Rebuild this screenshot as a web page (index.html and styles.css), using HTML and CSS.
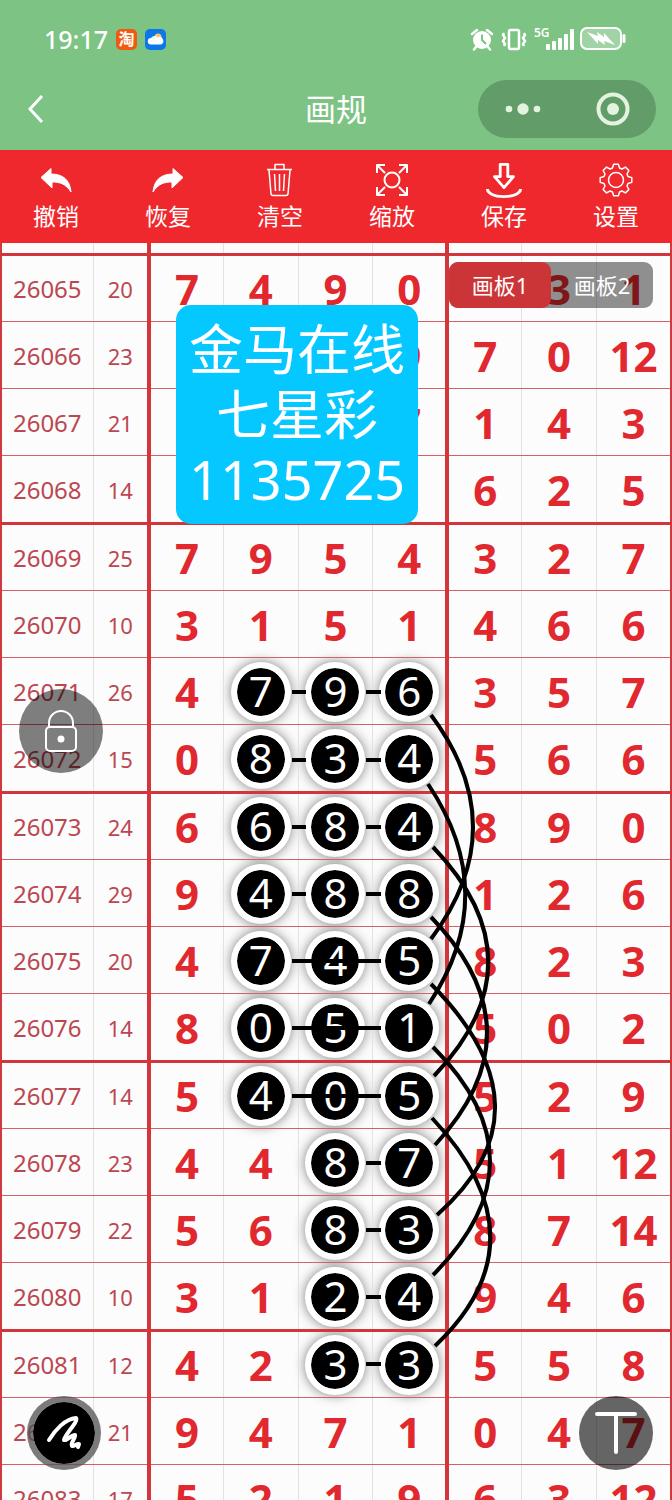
FILE: index.html
```
<!DOCTYPE html>
<html lang="zh-CN">
<head>
  <meta charset="UTF-8" />
  <meta name="viewport" content="width=device-width, initial-scale=1.0" />
  <title>画规</title>
  <link rel="stylesheet" href="styles.css">
</head>
<body>
  <header class="top">
    <div class="status">
      <span class="hora">19:17</span>
      <span class="app app-tao">淘</span>
      <span class="app app-clima">
        <svg width="21" height="21" viewBox="0 0 21 21">
          <circle cx="13" cy="8" r="3.5" fill="#ffc46b" />
          <path d="M6 15.500a3.200 3.200 0 0 1 0-6.400 4 4 0 0 1 6.500-.8 3.500 3.500 0 0 1 3.500 7.200z" fill="#fff" />
        </svg>
      </span>
      <div class="status-right">
        <svg width="24" height="24" viewBox="0 0 24 24">
          <circle cx="12" cy="13" r="9" fill="#fff" />
          <path d="M2 7l5-4M22 7l-5-4M6 20l-2 2.500M18 20l2 2.500" stroke="#fff" stroke-width="2.500" stroke-linecap="round" />
          <path d="M12 7.500V13l4 4" fill="none" stroke="#7dc383" stroke-width="2" />
        </svg>
        <svg width="28" height="24" viewBox="0 0 28 24" fill="none" stroke="#fff" stroke-width="2.500">
          <rect x="9" y="3" width="10" height="19" rx="1.500" />
          <path d="M4 6l-1 2 2 3-2 3 2 3-1 2M24 6l1 2-2 3 2 3-2 3 1 2" />
        </svg>
        <span class="signal">
          <small>5G</small>
          <svg width="28" height="22" viewBox="0 0 28 22" fill="#fff">
            <rect x="0" y="16" width="4" height="6" rx="1" />
            <rect x="6" y="13" width="4" height="9" rx="1" />
            <rect x="12" y="10" width="4" height="12" rx="1" />
            <rect x="18" y="6" width="4" height="16" rx="1" />
            <rect x="24" y="1" width="4" height="21" rx="1" />
          </svg>
        </span>
        <svg width="47" height="24" viewBox="0 0 47 24">
          <rect x="1" y="1" width="40" height="21" rx="6" fill="#a2d3a6" stroke="#fff" stroke-width="2" />
          <path d="M44 8.500v6" stroke="#fff" stroke-width="3" stroke-linecap="round" />
          <path d="M7 5l11 4-1-4 7 5 0-4 11 12-11-4 1 4-7-5 0 4z" fill="#fff" />
        </svg>
      </div>
    </div>
    <div class="nav">
      <button class="back" aria-label="返回">
        <svg width="18" height="30" viewBox="0 0 18 30"><path d="M15 2L3 15l12 13" fill="none" stroke="#fff" stroke-width="3" /></svg>
      </button>
      <h1>画规</h1>
      <div class="capsule">
        <button aria-label="更多">
          <svg width="38" height="14" viewBox="0 0 38 14" fill="#e3f3e0"><circle cx="4" cy="7" r="3.300" /><circle cx="18" cy="7" r="5.700" /><circle cx="32" cy="7" r="3.300" /></svg>
        </button>
        <button aria-label="关闭">
          <svg width="34" height="34" viewBox="0 0 34 34"><circle cx="17" cy="17" r="14.500" fill="none" stroke="#e3f3e0" stroke-width="4" /><circle cx="17" cy="17" r="6" fill="#e3f3e0" /></svg>
        </button>
      </div>
    </div>
  </header>

  <nav class="toolbar">
    <button>
      <svg viewBox="0 0 36 36"><path d="M3 15.500L13 6.500V12C25 12 32 18 33 30C28 22 22 20 14 20V26Z" fill="#fff" stroke="#fff" stroke-linejoin="round" /></svg>
      撤销
    </button>
    <button>
      <svg viewBox="0 0 36 36"><path d="M33 15.500L23 6.500V12C11 12 4 18 3 30C8 22 14 20 22 20V26Z" fill="#fff" stroke="#fff" stroke-linejoin="round" /></svg>
      恢复
    </button>
    <button>
      <svg viewBox="0 0 36 36" class="linea"><path d="M5 7.500h25M13 7V2.500h9V7M7 8l2 24q.3 1.500 2 1.500h13q1.700 0 2-1.500l2-24M12.500 12l1 17M17.500 12v17M22.500 12l-1 17" /></svg>
      清空
    </button>
    <button>
      <svg viewBox="0 0 36 36" class="linea zoom"><circle cx="18" cy="18" r="7.500" /><path d="M3 11V3h8M3 3l8 8M25 3h8v8M33 3l-8 8M3 25v8h8M3 33l8-8M25 33h8v-8M33 33l-8-8" /></svg>
      缩放
    </button>
    <button>
      <svg viewBox="0 0 38 38" class="linea guardar"><path d="M15 2.500h8v13h6L19 27 9 15.500h6zM1.500 28.500c0 4 6 8 17.500 8s17.500-4 17.500-8" /></svg>
      保存
    </button>
    <button>
      <svg viewBox="-18 -18 36 36" class="linea"><circle r="7.500" /><path d="M12-3.500L15.800-2.400V2.400L12 3.500L11 6L12.900 9.500L9.500 12.900L6 11L3.500 12L2.400 15.800H-2.400L-3.500 12L-6 11L-9.500 12.900L-12.900 9.500L-11 6L-12 3.500L-15.800 2.400V-2.400L-12-3.500L-11-6L-12.900-9.500L-9.500-12.900L-6-11L-3.500-12L-2.400-15.800H2.400L3.500-12L6-11L9.500-12.900L12.900-9.500L11-6Z" /></svg>
      设置
    </button>
  </nav>

  <main class="board">
    <table>
      <colgroup><col class="col-num"><col class="col-sum"><col span="7"></colgroup>
      <tbody id="filas"></tbody>
    </table>

    <!-- líneas entre las bolas -->
    <svg class="trazos" viewBox="0 0 672 1257" preserveAspectRatio="none">
      <path d="M292 449h14M366 449h15M292 517h14M366 517h15M292 584h14M366 584h15M292 651h14M366 651h15" />
      <path d="M292 718h89M292 785h89M292 853h89" />
      <path d="M366 920h15M366 987h15M366 1054h15M366 1121h15" />
      <path d="M431 472Q515 584 431 696" />
      <path d="M428 541Q502 651 429 761" />
      <path d="M433 604Q543 719 434 833" />
      <path d="M431 674Q541 788 435 902" />
      <path d="M431 741Q556 867 437 972" />
      <path d="M433 804Q547 918 433 1032" />
      <path d="M432 875Q547 997 435 1103" />
    </svg>

    <div class="nota">金马在线<br>七星彩<br>1135725</div>

    <div class="tabs">
      <button class="activa">画板1</button>
      <button>画板2</button>
    </div>

    <button class="redondo candado" aria-label="锁定">
      <svg width="34" height="44" viewBox="0 0 34 44" fill="none" stroke="#fff" stroke-width="2"><rect x="2" y="18" width="30" height="24" rx="4" /><path d="M5 18v-4a12 12 0 0 1 24 0v4" /><circle cx="17" cy="30" r="2.500" fill="#fff" /></svg>
    </button>
  </main>

  <button class="redondo lapiz" aria-label="画笔">
    <svg width="40" height="40" viewBox="0 0 40 40" fill="none" stroke="#fff" stroke-width="4" stroke-linecap="round" stroke-linejoin="round"><path d="M5 27C11 17 21 6 32 5C35 8 21 21 20 27C23 28 27 22 31 22C32 25 26 30 28 33C30 34 33 30 35 31L34 34" /></svg>
  </button>
  <button class="redondo texto" aria-label="文字">
    <svg width="44" height="44" viewBox="0 0 44 44" stroke="#fff" stroke-width="4" stroke-linecap="round"><path d="M3 3h38M22 3v38" /></svg>
  </button>

  <script>
    // [期号, 和值, 号码, columna donde empiezan las bolas]
    const datos = [
      ["26065", 20, [7, 4, 9, 0, "", 3, 1]],
      ["26066", 23, ["", "", "", 9, 7, 0, 12]],
      ["26067", 21, ["", "", "", 7, 1, 4, 3]],
      ["26068", 14, ["", "", "", "", 6, 2, 5]],
      ["26069", 25, [7, 9, 5, 4, 3, 2, 7]],
      ["26070", 10, [3, 1, 5, 1, 4, 6, 6]],
      ["26071", 26, [4, 7, 9, 6, 3, 5, 7], 1],
      ["26072", 15, [0, 8, 3, 4, 5, 6, 6], 1],
      ["26073", 24, [6, 6, 8, 4, 8, 9, 0], 1],
      ["26074", 29, [9, 4, 8, 8, 1, 2, 6], 1],
      ["26075", 20, [4, 7, 4, 5, 8, 2, 3], 1],
      ["26076", 14, [8, 0, 5, 1, 5, 0, 2], 1],
      ["26077", 14, [5, 4, 0, 5, 5, 2, 9], 1],
      ["26078", 23, [4, 4, 8, 7, 5, 1, 12], 2],
      ["26079", 22, [5, 6, 8, 3, 8, 7, 14], 2],
      ["26080", 10, [3, 1, 2, 4, 9, 4, 6], 2],
      ["26081", 12, [4, 2, 3, 3, 5, 5, 8], 2],
      ["26082", 21, [9, 4, 7, 1, 0, 4, 7]],
      ["26083", 17, [5, 2, 1, 9, 6, 3, 12]]
    ];

    const filas = document.getElementById("filas");
    filas.innerHTML = `<tr class="corte">${"<td></td>".repeat(9)}</tr>`;

    datos.forEach(([numero, suma, cifras, desde]) => {
      const tr = document.createElement("tr");
      const celdas = cifras.map((n, i) => {
        const bola = desde && i >= desde && i <= 3;
        return bola ? `<td><span class="bola">${n}</span></td>` : `<td>${n}</td>`;
      });
      tr.innerHTML = `<td class="num">${numero}</td><td class="sum">${suma}</td>${celdas.join("")}`;
      filas.appendChild(tr);
    });
  </script>
</body>
</html>
```
FILE: styles.css
```
* {
  box-sizing: border-box;
}
body {
  margin: 0;
  height: 100vh;
  display: flex;
  flex-direction: column;
  overflow: hidden;
  background: #fcfcfc;
  font-family: "Noto Sans", "Noto Sans CJK SC", sans-serif;
}
button {
  margin: 0;
  padding: 0;
  border: 0;
  background: none;
  color: #fff;
  font-family: inherit;
}
svg {
  display: block;
}

/* cabecera */
.top {
  background: #7dc383;
  color: #fff;
}
.status {
  display: flex;
  align-items: center;
  gap: 8px;
  height: 68px;
  padding: 10px 45px 0 44px;
}
.hora {
  font-size: 25px;
  font-weight: 500;
}
.app {
  width: 21px;
  height: 21px;
  border-radius: 5px;
  overflow: hidden;
}
.app-tao {
  background: #f2590d;
  font-size: 16px;
  line-height: 21px;
  font-weight: 700;
  text-align: center;
}
.app-clima {
  background: #0a78e8;
}
.status-right {
  display: flex;
  align-items: center;
  gap: 6px;
  margin-left: auto;
}
.signal {
  position: relative;
  padding-left: 12px;
}
.signal small {
  position: absolute;
  left: 0;
  top: -2px;
  font-size: 12px;
  line-height: 13px;
  font-weight: 600;
}
.nav {
  display: grid;
  grid-template-columns: 1fr auto 1fr;
  align-items: center;
  height: 82px;
  padding: 0 16px 0 27px;
}
.nav h1 {
  margin: 0;
  font-size: 31px;
  line-height: 40px;
  font-weight: 400;
  padding-right: 11px;
}
.back {
  justify-self: start;
}
.capsule {
  justify-self: end;
  display: flex;
  justify-content: space-around;
  align-items: center;
  width: 178px;
  height: 58px;
  border-radius: 29px;
  background: #629d69;
}

/* herramientas */
.toolbar {
  display: grid;
  grid-template-columns: repeat(6, 1fr);
  height: 93px;
  flex: none;
  background: #ee282d;
}
.toolbar button {
  display: flex;
  flex-direction: column;
  align-items: center;
  padding-top: 12px;
  font-size: 23px;
  line-height: 36px;
}
.toolbar svg {
  width: 36px;
  height: 36px;
}
.linea {
  fill: none;
  stroke: #fff;
  stroke-width: 1.5;
  stroke-linejoin: round;
}
.zoom {
  stroke-width: 2;
}
.guardar {
  stroke-width: 3;
}

/* tabla */
.board {
  position: relative;
  flex: 1;
  min-height: 0;
  overflow: hidden;
}
table {
  width: 100%;
  table-layout: fixed;
  border-collapse: collapse;
  border-left: 2px solid #cf3a3e;
  border-right: 2px solid #cf3a3e;
}
.col-num {
  width: 92px;
}
.col-sum {
  width: 56px;
}
td {
  height: 67px;
  padding: 0;
  border-right: 1px solid #eadfe0;
  border-bottom: 1px solid #d4606a;
  color: #e0282e;
  font-size: 42px;
  line-height: 58px;
  font-weight: 700;
  text-align: center;
}
td:nth-child(2),
td:nth-child(6) {
  border-right: 4px solid #d2363a;
}
td:last-child {
  border-right: 2px solid #cf3a3e;
}
tr:nth-child(4n + 1) td {
  height: 68px;
  border-bottom: 3px solid #d2363a;
}
tr.corte td {
  height: 11px;
}
tr:not(.corte) td {
  padding-top: 2px;
}
.num,
.sum {
  color: #bb4750;
  font-size: 24px;
  font-weight: 400;
}
.sum {
  font-size: 22px;
}
.bola {
  display: block;
  width: 60px;
  height: 60px;
  margin: 0 auto;
  border: 6px solid #fff;
  border-radius: 50%;
  background: #000;
  background-clip: padding-box;
  box-shadow: 0 0 12px rgba(0, 0, 0, 0.5);
  color: #fff;
  line-height: 46px;
  font-weight: 400;
}
.trazos {
  position: absolute;
  left: 0;
  top: 0;
  width: 100%;
  height: 1257px;
  fill: none;
  stroke: #000;
  stroke-width: 4;
}

/* encima del tablero */
.nota {
  position: absolute;
  left: 176px;
  top: 62px;
  padding: 12px 13px;
  border-radius: 15px;
  background: #04c8ff;
  color: #fff;
  font-size: 54px;
  line-height: 65px;
  text-align: center;
}
.tabs {
  position: absolute;
  right: 19px;
  top: 19px;
  display: flex;
  border-radius: 9px;
  background: rgba(0, 0, 0, 0.43);
}
.tabs button {
  width: 102px;
  height: 46px;
  padding-bottom: 3px;
  border-radius: 9px;
  font-size: 22px;
}
.tabs .activa {
  background: #cc3537;
}
.redondo {
  position: absolute;
  display: flex;
  align-items: center;
  justify-content: center;
  width: 74px;
  height: 74px;
  border-radius: 50%;
  background: rgba(0, 0, 0, 0.6);
}
.candado {
  left: 19px;
  top: 446px;
  width: 84px;
  height: 84px;
  background: rgba(0, 0, 0, 0.5);
}
.lapiz {
  left: 27px;
  bottom: 30px;
  border: 6px solid rgba(80, 80, 80, 0.75);
  background: #000;
  background-clip: padding-box;
}
.texto {
  right: 19px;
  bottom: 30px;
}
```
